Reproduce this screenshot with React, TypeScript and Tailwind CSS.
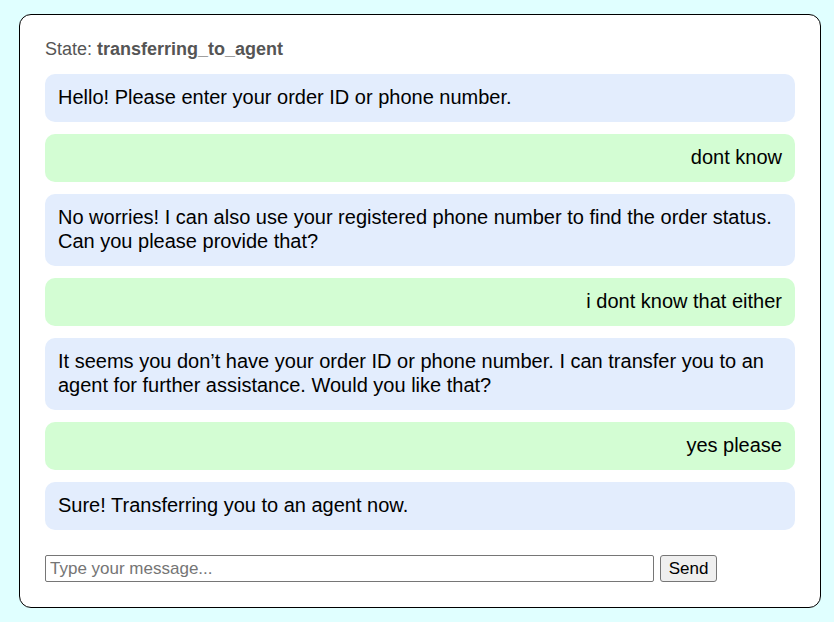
import React from 'react'

type Msg = { from: 'bot' | 'user'; text: string }

const messages: Msg[] = [
  { from: 'bot', text: 'Hello! Please enter your order ID or phone number.' },
  { from: 'user', text: 'dont know' },
  { from: 'bot', text: 'No worries! I can also use your registered phone number to find the order status. Can you please provide that?' },
  { from: 'user', text: 'i dont know that either' },
  { from: 'bot', text: 'It seems you don’t have your order ID or phone number. I can transfer you to an agent for further assistance. Would you like that?' },
  { from: 'user', text: 'yes please' },
  { from: 'bot', text: 'Sure! Transferring you to an agent now.' },
]

export default function App() {
  return (
    <div className="min-h-[622px] bg-[#e0ffff] pl-[19px] pt-[14px] pb-[14px] font-['Liberation_Sans',Arial,sans-serif]">
      <div className="w-[802px] bg-white border border-black rounded-[12px] px-[25px] pt-[24px] pb-[25px]">
        <div className="text-[18px] leading-[20px] text-[#555]">
          State: <span className="font-bold">transferring_to_agent</span>
        </div>
        <div className="mt-[15px] flex flex-col gap-[12px]">
          {messages.map((m, i) => (
            <div
              key={i}
              className={
                m.from === 'bot'
                  ? 'bg-[#e3edfd] rounded-[10px] px-[13px] pt-[11px] pb-[13px] text-[20px] leading-[24px] text-black'
                  : 'bg-[#d3fdd3] rounded-[10px] px-[13px] pt-[11px] pb-[13px] text-[20px] leading-[24px] text-black text-right'
              }
            >
              {m.text}
            </div>
          ))}
        </div>
        <div className="mt-[25px] flex items-center gap-[6px]">
          <input
            className="w-[609px] h-[27px] border border-[#767676] rounded-[2px] px-[4px] text-[17px] text-black placeholder:text-[#757575] outline-none"
            placeholder="Type your message..."
          />
          <button className="w-[57px] h-[27px] bg-[#efefef] border border-[#767676] rounded-[3px] text-[17px] text-black">
            Send
          </button>
        </div>
      </div>
    </div>
  )
}
